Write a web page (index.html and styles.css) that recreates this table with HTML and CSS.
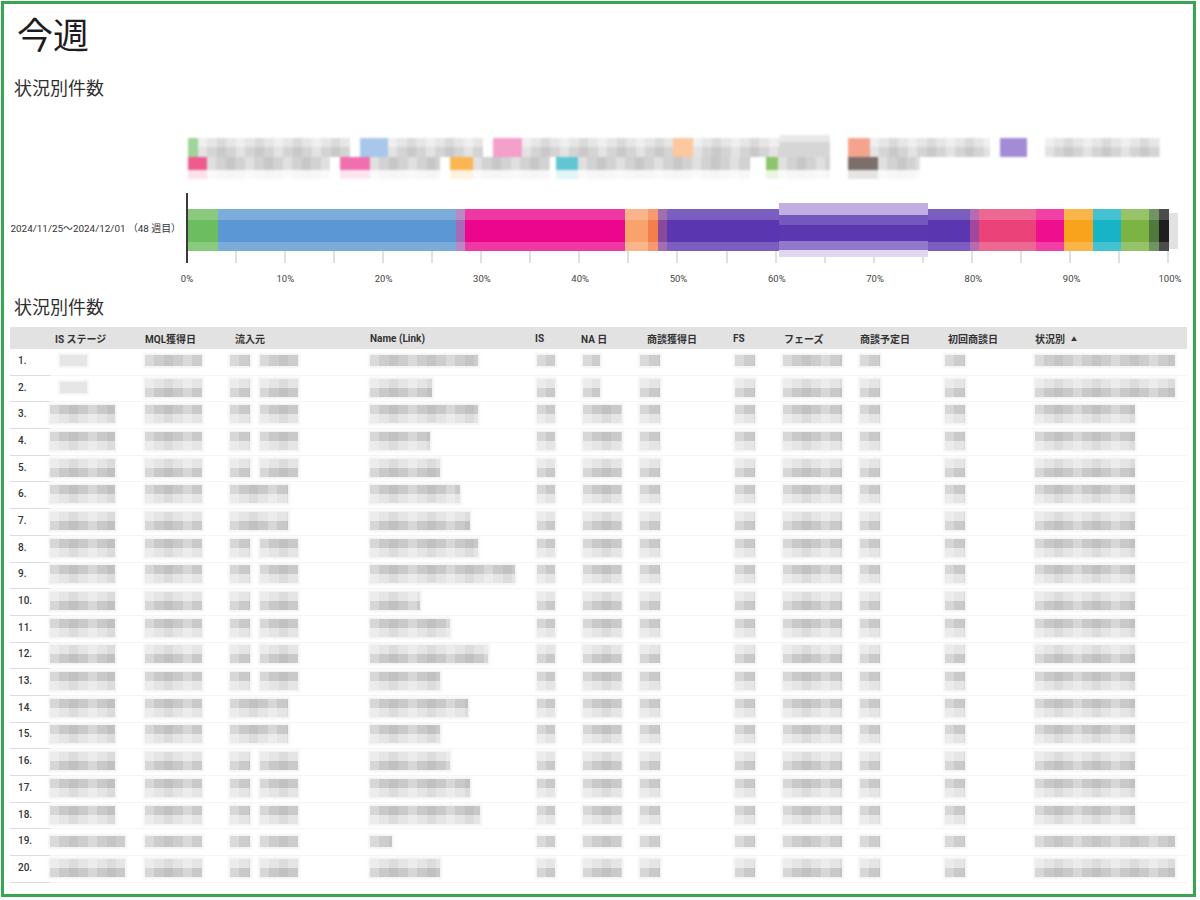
FILE: index.html
```html
<!DOCTYPE html>
<html lang="ja">
<head>
<meta charset="utf-8">
<title>今週</title>
<link rel="stylesheet" href="styles.css">
</head>
<body>
<div class="frame">
  <h1 class="title">今週</h1>
  <h2 class="subtitle">状況別件数</h2>
  <div class="chart">
    <div class="legend" id="legend"></div>
    <div class="plotrow">
      <div class="ylabel">2024/11/25〜2024/12/01 （48 週目）</div>
      <div class="plot">
        <div class="bar">
          <span class="seg s-green"></span>
          <span class="seg s-blue"></span>
          <span class="seg s-mix1"></span>
          <span class="seg s-magenta"></span>
          <span class="seg s-orange1"></span>
          <span class="seg s-orange2"></span>
          <span class="seg s-mix2"></span>
          <span class="seg s-purple"></span>
          <span class="seg s-mix3"></span>
          <span class="seg s-red"></span>
          <span class="seg s-magenta2"></span>
          <span class="seg s-amber"></span>
          <span class="seg s-teal"></span>
          <span class="seg s-lime"></span>
          <span class="seg s-dkgreen"></span>
          <span class="seg s-black"></span>
          <div class="blurbox"></div>
        </div>
        <div class="ticks">
          <i></i><i></i><i></i><i></i><i></i><i></i><i></i><i></i><i></i><i></i>
          <i></i><i></i><i></i><i></i><i></i><i></i><i></i><i></i><i></i><i></i>
        </div>
      </div>
    </div>
    <div class="xlabels">
      <span>0%</span><span>10%</span><span>20%</span><span>30%</span><span>40%</span><span>50%</span>
      <span>60%</span><span>70%</span><span>80%</span><span>90%</span><span>100%</span>
    </div>
  </div>
  <h2 class="subtitle subtitle2">状況別件数</h2>
  <div class="table">
    <div class="thead">
      <div></div>
      <div>IS ステージ</div>
      <div>MQL獲得日</div>
      <div>流入元</div>
      <div>Name (Link)</div>
      <div>IS</div>
      <div>NA 日</div>
      <div>商談獲得日</div>
      <div>FS</div>
      <div>フェーズ</div>
      <div>商談予定日</div>
      <div>初回商談日</div>
      <div>状況別<span class="sort">▲</span></div>
    </div>
    <div id="tbody"></div>
  </div>
</div>
<script src="script.js"></script>
</body>
</html>
```

FILE: styles.css
```css
* { box-sizing: border-box; }
html, body { margin: 0; background: #fff; }
body { font-family: Roboto, "Noto Sans CJK JP", sans-serif; color: #222; }

.frame {
  margin: 1px 0 0 1px;
  width: 1195px;
  height: 896px;
  border: 3px solid #37a650;
  padding: 9px 5px 0 6px;
  overflow: hidden;
}

.title {
  margin: 0 0 0 7px;
  font: 400 36px/40px "Noto Sans CJK JP", sans-serif;
  color: #1d1d1d;
}
.subtitle {
  margin: 22px 0 0 4px;
  font: 400 18px/24px "Noto Sans CJK JP", sans-serif;
  color: #303030;
}
.subtitle2 { margin-top: 0; }

/* chart */
.chart { height: 195px; }
.legend {
  margin-left: 177px;
  padding-top: 39px;
  height: 94px;
  filter: blur(0.8px);
}
.lrow { display: flex; }
.lrow.r1 { height: 19px; }
.lrow.r2 { height: 13px; }
.lrow.fade { height: 9px; opacity: 0.18; }
.lrow span { display: block; height: 100%; flex: none; }
.lrow .g {
  background:
    linear-gradient(90deg, rgba(255,255,255,.35) 0 9px, transparent 9px 19px, rgba(0,0,0,.05) 19px 28px, transparent 28px 38px) 0 0 / 38px 100% repeat-x,
    linear-gradient(#e6e6e6 0 45%, #d4d4d4 45% 100%);
}
.lrow.r2 .g {
  background:
    linear-gradient(90deg, rgba(255,255,255,.3) 0 9px, transparent 9px 19px, rgba(0,0,0,.05) 19px 28px, transparent 28px 38px) 0 0 / 38px 100% repeat-x,
    #d2d2d2;
}
.lrow .g2 {
  background: linear-gradient(#e8e8e8 0 30%, #d6d6d6 30% 100%);
  margin-top: -3px;
  height: calc(100% + 3px);
}

.plotrow { display: flex; height: 70px; }
.ylabel {
  width: 177px;
  flex: none;
  display: flex;
  align-items: center;
  justify-content: flex-end;
  padding-right: 6px;
  font-size: 9.9px;
  color: #333;
  white-space: nowrap;
}
.plot {
  width: 983px;
  flex: none;
  border-left: 2px solid #3a3a3a;
  margin-left: -1px;
  padding-top: 16px;
}
.bar {
  position: relative;
  display: flex;
  height: 42px;
}
.bar::after {
  content: "";
  position: absolute;
  inset: 0;
  z-index: 1;
  background: linear-gradient(rgba(255,255,255,.2) 0 11px, transparent 11px 33px, rgba(255,255,255,.2) 33px 42px);
}
.bar::before {
  content: "";
  position: absolute;
  left: 100%;
  top: 4px;
  width: 9px;
  height: 36px;
  background: #d4d4d4;
  opacity: .7;
}
.seg { display: block; height: 100%; flex: none; }
.s-green { width: 3.05%; background: #6cbd5f; }
.s-blue { width: 24.25%; background: #5a97d3; }
.s-mix1 { width: 0.9%; background: #a66bb8; }
.s-magenta { width: 16.3%; background: #ec068d; }
.s-orange1 { width: 2.4%; background: #f8a26c; }
.s-orange2 { width: 1.0%; background: #f57e4e; }
.s-mix2 { width: 0.9%; background: #8a4a9c; }
.s-purple { width: 30.9%; background: #5a36b0; }
.s-mix3 { width: 0.9%; background: #a2479e; }
.s-red { width: 5.8%; background: #ea4279; }
.s-magenta2 { width: 2.9%; background: #ef0f8e; }
.s-amber { width: 3.0%; background: #f9a31d; }
.s-teal { width: 2.8%; background: #17b3c7; }
.s-lime { width: 2.9%; background: #7cb443; }
.s-dkgreen { width: 1.0%; background: #4f793e; }
.s-black { width: 1.0%; background: #1f1f1f; }

.blurbox {
  position: absolute;
  z-index: 2;
  left: 60.2%;
  width: 15.2%;
  top: -6px;
  height: 54px;
  background: linear-gradient(#c0afe0 0 12px, #7458be 12px 22px, #5b37b1 22px 38px, #9078cb 38px 47px, #e0d8f1 47px 54px);
  filter: blur(0.6px);
}

.ticks {
  display: grid;
  grid-template-columns: repeat(20, 1fr);
  height: 12px;
}
.ticks i { border-right: 2px solid #e0e0e0; }

.xlabels {
  display: flex;
  justify-content: space-between;
  margin: 9px 0 0 157px;
  width: 1023px;
  height: 14px;
  font-size: 9.5px;
  line-height: 14px;
  color: #444;
}
.xlabels span { width: 40px; text-align: center; }

/* table */
.table { margin-top: 9px; width: 1177px; }
.thead, .tr {
  display: grid;
  grid-template-columns: 40px 90px 90px 135px 165px 46px 66px 86px 51px 76px 88px 87px 157px;
}
.thead {
  height: 22px;
  background: #e2e2e2;
  align-items: center;
  font-weight: 700;
  font-size: 10px;
  color: #333;
}
.thead > div { padding-left: 5px; white-space: nowrap; }
.sort { font-size: 6px; margin-left: 6px; vertical-align: 2px; }

.tr {
  height: 26.7px;
  background: linear-gradient(#f5f5f5, #f5f5f5) left bottom / 100% 1px no-repeat;
}
.num {
  border-bottom: 1px solid #dcdcdc;
  font-size: 10px;
  font-weight: 500;
  color: #333;
  padding: 0 0 3px 8px;
  display: flex;
  align-items: center;
}
.cell {
  display: flex;
  align-items: center;
  padding-bottom: 3px;
  filter: blur(0.5px);
}
.cb {
  display: block;
  flex: none;
  height: 18px;
  box-shadow: 0 0 2px 2px #f4f4f4;
}
.cb.b {
  background:
    linear-gradient(90deg, rgba(255,255,255,.25) 0 9px, transparent 9px 19px, rgba(0,0,0,.04) 19px 28px, transparent 28px 38px) 0 0 / 38px 100% repeat-x,
    linear-gradient(#e5e5e5 0 50%, #c9c9c9 50% 100%);
}
.cb.t {
  background:
    linear-gradient(90deg, rgba(255,255,255,.25) 0 9px, transparent 9px 19px, rgba(0,0,0,.04) 19px 28px, transparent 28px 38px) 0 0 / 38px 100% repeat-x,
    linear-gradient(#c9c9c9 0 50%, #e5e5e5 50% 100%);
}
.cb.m {
  height: 11px;
  background:
    linear-gradient(90deg, rgba(255,255,255,.25) 0 9px, transparent 9px 19px, rgba(0,0,0,.04) 19px 28px, transparent 28px 38px) 0 0 / 38px 100% repeat-x,
    #cdcdcd;
}
.cb.l {
  height: 11px;
  background: #e6e6e6;
}
```

FILE: script.js
```js
(function () {
  var legend = document.getElementById('legend');
  var L = [
    [[1, 11, '#9fd49a'], [11, 163, 'g'], [173, 201, '#a9c7ea'], [201, 296, 'g'], [306, 335, '#f5a0cb'], [335, 486, 'g'], [486, 506, '#fcc89d'], [506, 593, 'g'], [593, 643, 'g2'], [661, 683, '#f4a48d'], [683, 803, 'g'], [813, 840, '#a48bd6'], [858, 973, 'g']],
    [[1, 20, '#ee5b8d'], [20, 143, 'g'], [153, 183, '#f06fae'], [183, 253, 'g'], [263, 286, '#fbb552'], [286, 363, 'g'], [369, 391, '#60c7d2'], [391, 563, 'g'], [579, 591, '#8cc56c'], [591, 643, 'g'], [661, 691, '#7a6f6a'], [691, 733, 'g']]
  ];
  function buildRow(items, cls) {
    var row = document.createElement('div');
    row.className = 'lrow ' + cls;
    var prev = 0;
    items.forEach(function (it) {
      var s = document.createElement('span');
      s.style.marginLeft = (it[0] - prev) + 'px';
      s.style.width = (it[1] - it[0]) + 'px';
      if (it[2] === 'g' || it[2] === 'g2') {
        s.className = it[2];
      } else {
        s.style.background = it[2];
      }
      prev = it[1];
      row.appendChild(s);
    });
    legend.appendChild(row);
  }
  buildRow(L[0], 'r1');
  buildRow(L[1], 'r2');
  buildRow(L[1], 'r2 fade');

  var names = [108, 62, 108, 60, 70, 90, 100, 108, 145, 50, 80, 118, 70, 98, 70, 80, 100, 110, 22, 70];
  var pat = 'mbttbtbttbtbtttbttmb';
  var single = { 6: 1, 7: 1, 14: 1, 15: 1 };
  var tbody = document.getElementById('tbody');
  for (var i = 1; i <= 20; i++) {
    var p = pat.charAt(i - 1);
    var cells = [
      i <= 2 ? [[10, 27, 'l']] : [[0, i >= 19 ? 75 : 65, p]],
      [[5, 57, p]],
      single[i] ? [[0, 58, p]] : [[0, 20, p], [10, 38, p]],
      [[5, names[i - 1], p]],
      [[7, 18, p]],
      [[7, i <= 2 ? 17 : 39, p]],
      [[-2, 20, p]],
      [[7, 20, p]],
      [[4, 59, p]],
      [[5, 20, p]],
      [[2, 20, p]],
      [[5, (i <= 2 || i >= 19) ? 140 : 100, p]]
    ];
    var tr = document.createElement('div');
    tr.className = 'tr';
    var num = document.createElement('div');
    num.className = 'num';
    num.textContent = i + '.';
    tr.appendChild(num);
    cells.forEach(function (bars) {
      var c = document.createElement('div');
      c.className = 'cell';
      bars.forEach(function (b) {
        var s = document.createElement('span');
        s.className = 'cb ' + b[2];
        s.style.marginLeft = b[0] + 'px';
        s.style.width = b[1] + 'px';
        c.appendChild(s);
      });
      tr.appendChild(c);
    });
    tbody.appendChild(tr);
  }
})();
```
